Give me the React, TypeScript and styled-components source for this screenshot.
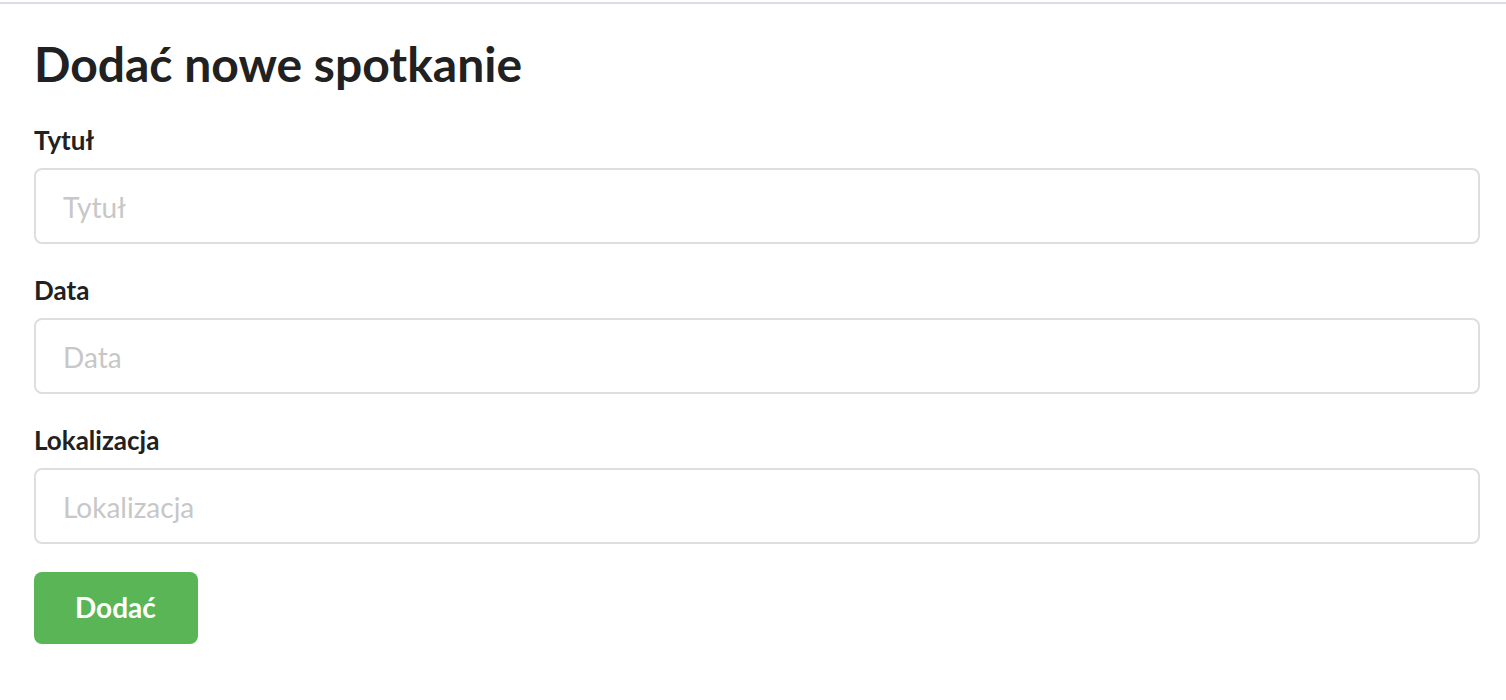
import React from "react";
import styled, { createGlobalStyle } from "styled-components";

const GlobalStyle = createGlobalStyle`
  *, *::before, *::after { box-sizing: border-box; }
  body {
    margin: 0;
    background: #fff;
    color: #212121;
    font-family: Lato, "Liberation Sans", sans-serif;
    font-size: 28px;
  }
`;

const Page = styled.main`
  margin-top: 2px;
  border-top: 2px solid #dcdce2;
  padding: 28px 26px 56px 34px;
`;

const Title = styled.h1`
  margin: 0 0 26px;
  font-size: 48px;
  line-height: 64px;
  font-weight: 700;
`;

const Form = styled.form`
  display: flex;
  flex-direction: column;
  align-items: flex-start;
  gap: 28px;
`;

const Field = styled.div`
  display: flex;
  flex-direction: column;
  gap: 10px;
  width: 100%;
`;

const Label = styled.label`
  font-size: 26px;
  line-height: 36px;
  font-weight: 700;
`;

const Input = styled.input`
  width: 100%;
  height: 76px;
  padding: 2px 27px 0;
  border: 2px solid #dedede;
  border-radius: 8px;
  background: #fff;
  color: inherit;
  font: inherit;

  &::placeholder {
    color: #c7c7c7;
    opacity: 1;
  }
`;

const SubmitButton = styled.button`
  height: 72px;
  padding: 0 42px 2px 41px;
  border: 0;
  border-radius: 8px;
  background: #5ab556;
  color: #fff;
  font: inherit;
  font-weight: 700;
  cursor: pointer;
`;

const fields = [
  { id: "title", label: "Tytuł" },
  { id: "date", label: "Data" },
  { id: "location", label: "Lokalizacja" },
];

export default function App() {
  return (
    <>
      <GlobalStyle />
      <Page>
        <Title>Dodać nowe spotkanie</Title>
        <Form onSubmit={(event) => event.preventDefault()}>
          {fields.map(({ id, label }) => (
            <Field key={id}>
              <Label htmlFor={id}>{label}</Label>
              <Input id={id} name={id} type="text" placeholder={label} />
            </Field>
          ))}
          <SubmitButton type="submit">Dodać</SubmitButton>
        </Form>
      </Page>
    </>
  );
}
